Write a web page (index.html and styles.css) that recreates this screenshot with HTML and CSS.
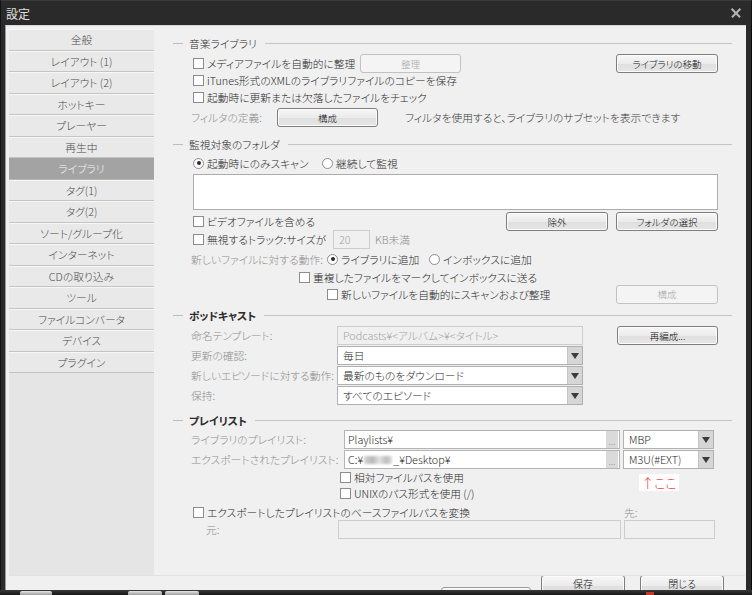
FILE: index.html
```html
<!DOCTYPE html>
<html lang="ja">
<head>
<meta charset="utf-8">
<title>設定</title>
<link rel="stylesheet" href="styles.css">
</head>
<body>
<div class="window">
  <div class="titlebar">
    <span class="title">設定</span>
    <span class="close-x" aria-label="閉じる"></span>
  </div>
  <div class="frame">
    <div class="client">
      <div class="content">
        <nav class="sidebar">
          <div class="nav-item">全般</div>
          <div class="nav-item">レイアウト (1)</div>
          <div class="nav-item">レイアウト (2)</div>
          <div class="nav-item">ホットキー</div>
          <div class="nav-item">プレーヤー</div>
          <div class="nav-item">再生中</div>
          <div class="nav-item active">ライブラリ</div>
          <div class="nav-item">タグ(1)</div>
          <div class="nav-item">タグ(2)</div>
          <div class="nav-item">ソート/グループ化</div>
          <div class="nav-item">インターネット</div>
          <div class="nav-item">CDの取り込み</div>
          <div class="nav-item">ツール</div>
          <div class="nav-item">ファイルコンバータ</div>
          <div class="nav-item">デバイス</div>
          <div class="nav-item">プラグイン</div>
        </nav>
        <main class="main">
          <section class="group g1">
            <div class="group-head"><span class="head-lead"></span><span class="head-text">音楽ライブラリ</span><span class="head-line"></span></div>
            <div class="row h19 mt3 pl-check">
              <span class="check w167"><span class="box"></span>メディアファイルを自動的に整理</span>
              <span class="btn disabled w101">整理</span>
              <span class="spacer"></span>
              <span class="btn w102">ライブラリの移動</span>
            </div>
            <div class="row h15 pl-check"><span class="check"><span class="box"></span>iTunes形式のXMLのライブラリファイルのコピーを保存</span></div>
            <div class="row h18 pl-check"><span class="check"><span class="box"></span>起動時に更新または欠落したファイルをチェック</span></div>
            <div class="row h19 mt2 pl-label">
              <span class="label w86">フィルタの定義:</span>
              <span class="btn w101">構成</span>
              <span class="note">フィルタを使用すると、ライブラリのサブセットを表示できます</span>
            </div>
          </section>

          <section class="group g2">
            <div class="group-head"><span class="head-lead"></span><span class="head-text">監視対象のフォルダ</span><span class="head-line"></span></div>
            <div class="row h16 mt3 pl-check">
              <span class="check w129"><span class="radio on"></span>起動時にのみスキャン</span>
              <span class="check"><span class="radio"></span>継続して監視</span>
            </div>
            <div class="listbox"></div>
            <div class="row h18 mt2 pl-check top">
              <span class="check"><span class="box"></span>ビデオファイルを含める</span>
              <span class="spacer"></span>
              <span class="btn w102">除外</span>
              <span class="btn w102 ml8">フォルダの選択</span>
            </div>
            <div class="row h18 pl-check">
              <span class="check w140"><span class="box"></span>無視するトラック:サイズが</span>
              <span class="field disabled w37">20</span>
              <span class="unit">KB未満</span>
            </div>
            <div class="row h16 mt3 pl-label">
              <span class="label w136">新しいファイルに対する動作:</span>
              <span class="check w102"><span class="radio on"></span>ライブラリに追加</span>
              <span class="check"><span class="radio"></span>インボックスに追加</span>
            </div>
            <div class="row h16 mt2 pl-dup"><span class="check"><span class="box"></span>重複したファイルをマークしてインボックスに送る</span></div>
            <div class="row h18 pl-auto">
              <span class="check"><span class="box"></span>新しいファイルを自動的にスキャンおよび整理</span>
              <span class="spacer"></span>
              <span class="btn disabled w102">構成</span>
            </div>
          </section>

          <section class="group g3">
            <div class="group-head"><span class="head-lead"></span><span class="head-text bold">ポッドキャスト</span><span class="head-line"></span></div>
            <div class="form mt3">
              <div class="row h19 pl-label">
                <span class="label w146">命名テンプレート:</span>
                <span class="field disabled w246">Podcasts¥&lt;アルバム&gt;¥&lt;タイトル&gt;</span>
                <span class="btn w101 ml34">再編成...</span>
              </div>
              <div class="row h19 pl-label">
                <span class="label w146">更新の確認:</span>
                <span class="select w246"><span class="select-text">毎日</span><span class="arrow"></span></span>
              </div>
              <div class="row h19 pl-label">
                <span class="label w146">新しいエピソードに対する動作:</span>
                <span class="select w246"><span class="select-text">最新のものをダウンロード</span><span class="arrow"></span></span>
              </div>
              <div class="row h19 pl-label">
                <span class="label w146">保持:</span>
                <span class="select w246"><span class="select-text">すべてのエピソード</span><span class="arrow"></span></span>
              </div>
            </div>
          </section>

          <section class="group g4">
            <div class="group-head"><span class="head-lead"></span><span class="head-text bold">プレイリスト</span><span class="head-line"></span></div>
            <div class="form mt2">
              <div class="row h19 pl-label">
                <span class="label w153">ライブラリのプレイリスト:</span>
                <span class="field w276"><span class="select-text">Playlists¥</span><span class="dots">...</span></span>
                <span class="select w91 ml3"><span class="select-text">MBP</span><span class="arrow"></span></span>
              </div>
              <div class="row h19 pl-label">
                <span class="label w153">エクスポートされたプレイリスト:</span>
                <span class="field w276"><span class="select-text">C:¥<span class="blur"></span>_¥Desktop¥</span><span class="dots">...</span></span>
                <span class="select w91 ml3"><span class="select-text">M3U(#EXT)</span><span class="arrow"></span></span>
              </div>
            </div>
            <div class="row h16 pl-rel"><span class="check"><span class="box"></span>相対ファイルパスを使用</span></div>
            <div class="row h16 pl-rel"><span class="check"><span class="box"></span>UNIXのパス形式を使用 (/)</span></div>
            <div class="row h16 mt3 pl-check">
              <span class="check w431"><span class="box"></span>エクスポートしたプレイリストのベースファイルパスを変換</span>
              <span class="label">先:</span>
            </div>
            <div class="row h19 pl-src">
              <span class="label w132">元:</span>
              <span class="field disabled w283"></span>
              <span class="field disabled w91 ml3"></span>
            </div>
            <div class="annotation">↑ここ</div>
          </section>
        </main>
      </div>
      <div class="footer">
        <span class="btn ghost">&nbsp;</span>
        <span class="btn fbtn">保存</span>
        <span class="btn fbtn ml15">閉じる</span>
      </div>
    </div>
  </div>
  <div class="taskbar">
    <span class="tb tb1"></span>
    <span class="tb tb2"></span>
    <span class="tb tb3"></span>
    <span class="tb-dot"></span>
  </div>
</div>
</body>
</html>
```

FILE: styles.css
```css
* { box-sizing: border-box; }

body {
  margin: 0;
  width: 752px;
  height: 595px;
  overflow: hidden;
  background: #202020;
  font-family: "Noto Sans CJK JP", "Noto Sans", sans-serif;
  font-size: 10.75px;
  font-weight: 300;
  font-feature-settings: "palt";
  color: #2a2a2a;
}

.window {
  display: flex;
  flex-direction: column;
  height: 595px;
}

.titlebar {
  height: 25px;
  flex: none;
  background: #2a2a2a;
  border-top: 1px solid #3a3a3a;
  border-left: 1px solid #111;
  border-right: 1px solid #111;
  display: flex;
  align-items: center;
  justify-content: space-between;
  padding: 0 10px 0 5px;
}

.title {
  color: #e2e2e2;
  font-size: 12px;
  font-weight: 400;
}

.close-x {
  position: relative;
  display: block;
  flex: none;
  width: 10px;
  height: 10px;
}
.close-x::before,
.close-x::after {
  content: "";
  position: absolute;
  left: -1px;
  top: 4.25px;
  width: 12px;
  height: 1.5px;
  background: #b4b4b4;
  transform: rotate(45deg);
}
.close-x::after { transform: rotate(-45deg); }

.frame {
  flex: none;
  height: 565px;
  display: flex;
  background: #2a2a2a;
  padding: 0 5px 0 4px;
  border-left: 1px solid #111;
  border-right: 1px solid #0a0a0a;
}

.client {
  flex: 1;
  display: flex;
  flex-direction: column;
  background: #f0f0f0;
  padding: 3px 1px 0 3px;
  border-left: 1px solid #9a9a9a;
  border-top: 1px solid #d8d8d8;
}

.content {
  display: flex;
  height: 546px;
  flex: none;
}

/* sidebar */
.sidebar {
  width: 145px;
  flex: none;
  background: #e5e5e5;
}

.nav-item {
  height: 21.5px;
  display: flex;
  align-items: center;
  justify-content: center;
  background: #e9e9e9;
  border-top: 1px solid #f7f7f7;
  border-bottom: 1px solid #c4c4c4;
  color: #4a4a4a;
}

.nav-item.active {
  background: #a3a3a3;
  border-top-color: #a3a3a3;
  border-bottom-color: #b4b4b4;
  color: #f6f6f6;
}

/* main panel */
.main {
  flex: 1;
  padding: 6px 13px 0 19px;
  background: #f0f0f0;
}

.group { position: relative; }
.g2 { margin-top: 9px; }
.g3 { margin-top: 4px; }
.g4 { margin-top: 7px; }

.group-head {
  display: flex;
  align-items: center;
  height: 16px;
  color: #2a2a2a;
}

.head-lead {
  width: 10px;
  height: 1px;
  background: #bdbdbd;
  margin-right: 6px;
  flex: none;
}

.head-line {
  flex: 1;
  height: 1px;
  background: #c4c4c4;
  margin-left: 8px;
}

.bold { font-weight: 700; }

.row {
  display: flex;
  align-items: center;
  padding-right: 14px;
  white-space: nowrap;
}
.row.top { align-items: flex-start; }
.row.top .check { height: 18px; }

.h15 { height: 15px; }
.h16 { height: 16px; }
.h18 { height: 18px; }
.h19 { height: 19px; }
.mt2 { margin-top: 2px; }
.mt3 { margin-top: 3px; }

.pl-check { padding-left: 20px; }
.pl-label { padding-left: 18px; }
.pl-dup { padding-left: 126px; }
.pl-auto { padding-left: 154px; }
.pl-rel { padding-left: 167px; }
.pl-src { padding-left: 33px; }

.form {
  display: flex;
  flex-direction: column;
  gap: 1px;
}

.spacer { flex: 1; }

.check {
  display: flex;
  align-items: center;
  flex: none;
}

.box {
  width: 11px;
  height: 11px;
  border: 1px solid #8c8c8c;
  background: #fff;
  margin-right: 3px;
  flex: none;
}

.radio {
  width: 11px;
  height: 11px;
  border-radius: 50%;
  border: 1px solid #8c8c8c;
  background: #fff;
  margin-right: 3px;
  flex: none;
  display: flex;
  align-items: center;
  justify-content: center;
}
.radio.on::after {
  content: "";
  width: 4px;
  height: 4px;
  border-radius: 50%;
  background: #2a2a2a;
}

.label {
  color: #8d8d8d;
  flex: none;
}

.note { margin-left: 27px; color: #3a3a3a; }
.unit { margin-left: 5px; color: #8d8d8d; }

.w37 { width: 37px; }
.w86 { width: 86px; }
.w91 { width: 91px; }
.w101 { width: 101px; }
.w102 { width: 102px; }
.w129 { width: 129px; }
.w132 { width: 132px; }
.w136 { width: 136px; }
.w140 { width: 140px; }
.w146 { width: 146px; }
.w153 { width: 153px; }
.w167 { width: 167px; }
.w246 { width: 246px; }
.w276 { width: 276px; }
.w283 { width: 283px; }
.w431 { width: 431px; }
.ml3 { margin-left: 3px; }
.ml8 { margin-left: 8px; }
.ml15 { margin-left: 15px; }
.ml34 { margin-left: 34px; }

/* buttons */
.btn {
  height: 19px;
  flex: none;
  display: flex;
  align-items: center;
  justify-content: center;
  border: 1px solid #7e7e7e;
  border-radius: 3px;
  background: linear-gradient(#f7f7f7, #ebebeb 50%, #dfdfdf 51%, #e6e6e6);
  color: #111;
  font-size: 9.5px;
  font-weight: 300;
  box-shadow: inset 0 0 0 1px #fbfbfb;
}

.btn.disabled {
  border-color: #c2c2c2;
  background: #f4f4f4;
  color: #a9a9a9;
  box-shadow: none;
}

/* fields */
.listbox {
  margin: 3px 14px 0 20px;
  height: 36px;
  background: #fff;
  border: 1px solid #acacac;
}

.field {
  height: 19px;
  flex: none;
  display: flex;
  align-items: center;
  background: #fff;
  border: 1px solid #b4b4b4;
  padding-left: 3px;
  overflow: hidden;
}

.field.disabled {
  background: #f0f0f0;
  border-color: #cdcdcd;
  color: #a2a2a2;
  padding-left: 5px;
}

.select {
  height: 19px;
  flex: none;
  display: flex;
  align-items: center;
  background: #fff;
  border: 1px solid #b0b0b0;
  padding-left: 5px;
}

.select-text {
  flex: 1;
  display: flex;
  align-items: center;
  overflow: hidden;
}

.arrow {
  width: 15px;
  height: 17px;
  flex: none;
  background: #d6d6d6;
  border-left: 1px solid #c4c4c4;
  display: flex;
  align-items: center;
  justify-content: center;
}
.arrow::after {
  content: "";
  border-left: 4px solid transparent;
  border-right: 4px solid transparent;
  border-top: 6px solid #3c3c3c;
}

.dots {
  width: 12px;
  height: 17px;
  flex: none;
  background: #dadada;
  color: #8a8a8a;
  font-size: 9px;
  display: flex;
  align-items: flex-end;
  justify-content: center;
  line-height: 12px;
  margin-right: 1px;
}

.blur {
  display: inline-block;
  width: 28px;
  height: 8px;
  margin: 0 1px;
  background: linear-gradient(90deg, #d6d6d6, #b8b8b8 30%, #e2e2e2 55%, #bcbcbc 80%, #dedede);
  filter: blur(1px);
}

.annotation {
  position: absolute;
  left: 466px;
  top: 62px;
  width: 40px;
  height: 17px;
  background: #fff;
  color: #e63a34;
  font-size: 13px;
  display: flex;
  align-items: center;
  justify-content: center;
}

/* footer */
.footer {
  height: 16px;
  flex: none;
  display: flex;
  align-items: flex-start;
  justify-content: flex-end;
  padding-right: 21px;
  border-top: 1px solid #e2e2e2;
  overflow: hidden;
}

.footer .fbtn {
  width: 84px;
  height: 22px;
  margin-top: -1px;
  font-size: 10px;
  line-height: 13px;
  align-items: flex-start;
  padding-top: 1px;
}

.footer .ghost {
  width: 90px;
  height: 10px;
  margin-top: 11px;
  margin-right: 10px;
  border-color: #9a9a9a;
}

/* taskbar */
.taskbar {
  height: 5px;
  flex: none;
  background: linear-gradient(#3a3a3a, #161616);
  position: relative;
}

.tb {
  position: absolute;
  bottom: 0;
  height: 4px;
  background: linear-gradient(#e8e8e8, #9a9a9a);
  border-radius: 2px 2px 0 0;
}
.tb1 { left: 20px; width: 32px; }
.tb2 { left: 128px; width: 34px; }
.tb3 { left: 165px; width: 34px; }

.tb-dot {
  position: absolute;
  left: 646px;
  bottom: 0;
  width: 8px;
  height: 3px;
  background: #c0392b;
}
```
